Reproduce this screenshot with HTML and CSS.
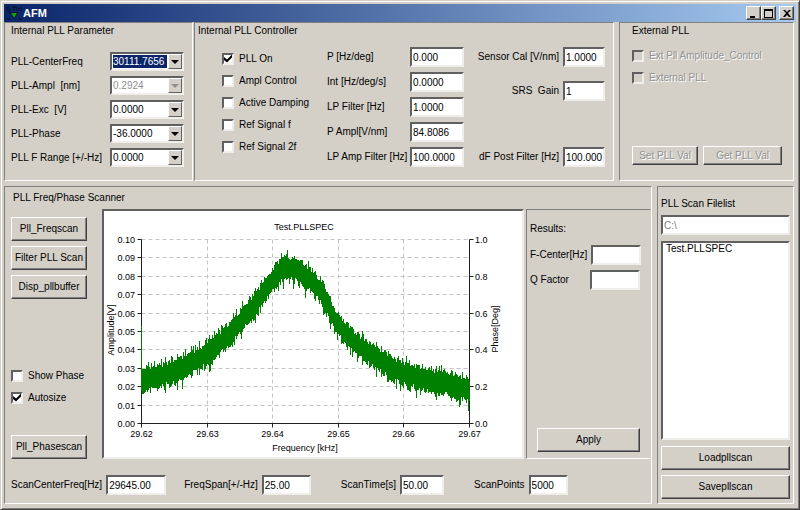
FILE: index.html
```html
<!DOCTYPE html>
<html lang="en">
<head>
  <meta charset="UTF-8">
  <meta name="viewport" content="width=device-width, initial-scale=1.0">
  <link rel="stylesheet" href="styles.css">
  <title>AFM</title>
</head>
<body>

<div class="window">
  <header class="titlebar">
    <svg class="app-icon" width="16" height="16" viewBox="0 0 16 16">
      <path d="M1 2h3M1 2v2h3v2H1M6 2h4M8 2v4M11 6V2l2 2 2-2v4" fill="none" stroke="#04102e" stroke-width="1"/>
      <path d="M3 7h10L8 14z" fill="#04102e"/>
      <path d="M5 8h6l-3 5z" fill="#10a010"/>
      <path d="M0 14h4M12 14h4" stroke="#04102e"/>
    </svg>
    <h1>AFM</h1>
    <button class="win-btn" aria-label="Minimize"><svg width="10" height="9" viewBox="0 0 10 9"><path d="M1 7h5v2H1z"/></svg></button>
    <button class="win-btn" aria-label="Maximize"><svg width="10" height="9" viewBox="0 0 10 9"><path fill-rule="evenodd" d="M0 0h9v9H0zM1 2v6h7V2z"/></svg></button>
    <button class="win-btn win-close" aria-label="Close"><svg width="10" height="9" viewBox="0 0 10 9"><path d="M1 1h2l2 2 2-2h2L6 4l3 4H7L5 6 3 8H1l3-4z"/></svg></button>
  </header>

  <main>
    <div class="top-row">
      <section class="panel parameter">
        <h2>Internal PLL Parameter</h2>
        <div class="combo-grid">
          <label for="center-freq">PLL-CenterFreq</label>
          <div class="combo active"><select id="center-freq"><option>30111.7656</option></select><span class="arrow"></span></div>
          <label for="ampl">PLL-Ampl&nbsp; [nm]</label>
          <div class="combo"><select id="ampl" disabled><option>0.2924</option></select><span class="arrow"></span></div>
          <label for="exc">PLL-Exc&nbsp; [V]</label>
          <div class="combo"><select id="exc"><option>0.0000</option></select><span class="arrow"></span></div>
          <label for="phase">PLL-Phase</label>
          <div class="combo"><select id="phase"><option>-36.0000</option></select><span class="arrow"></span></div>
          <label for="f-range">PLL F Range [+/-Hz]</label>
          <div class="combo"><select id="f-range"><option>0.0000</option></select><span class="arrow"></span></div>
        </div>
      </section>

      <section class="panel controller">
        <h2>Internal PLL Controller</h2>
        <div class="controller-body">
          <div class="checks">
            <label class="check"><input type="checkbox" checked>PLL On</label>
            <label class="check"><input type="checkbox">Ampl Control</label>
            <label class="check"><input type="checkbox">Active Damping</label>
            <label class="check"><input type="checkbox">Ref Signal f</label>
            <label class="check"><input type="checkbox">Ref Signal 2f</label>
          </div>
          <div class="gain-grid">
            <label for="p-gain">P [Hz/deg]</label><input type="text" id="p-gain" value="0.000">
            <label for="int-gain">Int [Hz/deg/s]</label><input type="text" id="int-gain" value="0.0000">
            <label for="lp-filter">LP Filter [Hz]</label><input type="text" id="lp-filter" value="1.0000">
            <label for="p-ampl">P Ampl[V/nm]</label><input type="text" id="p-ampl" value="84.8086">
            <label for="lp-amp">LP Amp Filter [Hz]</label><input type="text" id="lp-amp" value="100.0000">
          </div>
          <div class="sensor">
            <div class="field"><label for="sensor-cal">Sensor Cal [V/nm]</label><input type="text" id="sensor-cal" value="1.0000"></div>
            <div class="field"><label for="srs-gain">SRS&nbsp; Gain</label><input type="text" id="srs-gain" value="1"></div>
            <div class="field"><label for="post-filter">dF Post Filter [Hz]</label><input type="text" id="post-filter" value="100.000"></div>
          </div>
        </div>
      </section>

      <section class="panel external">
        <h2>External PLL</h2>
        <div class="checks">
          <label class="check disabled"><input type="checkbox" disabled>Ext Pll Amplitude_Control</label>
          <label class="check disabled"><input type="checkbox" disabled>External PLL</label>
        </div>
        <div class="external-buttons">
          <button class="btn" disabled>Set PLL Val</button>
          <button class="btn" disabled>Get PLL Val</button>
        </div>
      </section>
    </div>

    <div class="bottom-row">
      <section class="panel scanner">
        <h2>PLL Freq/Phase Scanner</h2>
        <div class="scanner-body">
          <div class="scan-tools">
            <button class="btn">Pll_Freqscan</button>
            <button class="btn">Filter PLL Scan</button>
            <button class="btn">Disp_pllbuffer</button>
            <div class="checks">
              <label class="check"><input type="checkbox">Show Phase</label>
              <label class="check"><input type="checkbox" checked>Autosize</label>
            </div>
            <button class="btn">Pll_Phasescan</button>
          </div>

          <div class="chart">
            <svg viewBox="0 0 418 246" role="img" aria-label="Amplitude over frequency">
              <g id="grid" class="grid"></g>
              <g id="axes" class="axes"></g>
              <path id="trace" class="trace"/>
              <g id="ticks"></g>
              <text x="200" y="19" text-anchor="middle">Test.PLLSPEC</text>
              <text x="201" y="240" text-anchor="middle">Frequency [kHz]</text>
              <text transform="translate(10 119) rotate(-90)" text-anchor="middle">Amplitude[V]</text>
              <text transform="translate(394 118) rotate(-90)" text-anchor="middle">Phase[Deg]</text>
            </svg>
          </div>

          <div class="results">
            <h3>Results:</h3>
            <div class="field"><label for="f-center">F-Center[Hz]</label><input type="text" id="f-center"></div>
            <div class="field"><label for="q-factor">Q Factor</label><input type="text" id="q-factor"></div>
            <button class="btn">Apply</button>
          </div>
        </div>
        <div class="scan-settings">
          <div class="field"><label for="scan-center">ScanCenterFreq[Hz]</label><input type="text" id="scan-center" value="29645.00"></div>
          <div class="field"><label for="freq-span">FreqSpan[+/-Hz]</label><input type="text" id="freq-span" value="25.00"></div>
          <div class="field"><label for="scan-time">ScanTime[s]</label><input type="text" id="scan-time" value="50.00"></div>
          <div class="field"><label for="scan-points">ScanPoints</label><input type="text" id="scan-points" value="5000"></div>
        </div>
      </section>

      <section class="panel filelist">
        <label for="scan-path">PLL Scan Filelist</label>
        <input type="text" id="scan-path" value="C:\" disabled>
        <select class="files" size="10" aria-label="Scan files">
          <option>Test.PLLSPEC</option>
        </select>
        <button class="btn">Loadpllscan</button>
        <button class="btn">Savepllscan</button>
      </section>
    </div>
  </main>
</div>

<script src="chart.js"></script>
</body>
</html>
```
FILE: styles.css
```css
* {
  box-sizing: border-box;
}

body {
  margin: 0;
  background: #d4d0c8;
  color: #000;
  font-family: "Liberation Sans", Arial, sans-serif;
  font-size: 10px;
  line-height: 16px;
}

h1, h2, h3 {
  margin: 0;
  font-size: 10px;
  font-weight: normal;
}

button, input, select {
  margin: 0;
  font: inherit;
  color: inherit;
}

label {
  white-space: nowrap;
}

.window {
  display: flex;
  flex-direction: column;
  min-height: 100vh;
  padding: 3px;
  border: 1px solid;
  border-color: #d4d0c8 #404040 #404040 #d4d0c8;
  box-shadow: inset 1px 1px #fff, inset -1px -1px #808080;
}

/* Title bar */
.titlebar {
  display: flex;
  align-items: center;
  height: 18px;
  padding: 0 2px;
  background: linear-gradient(to right, #0a246a, #a6caf0);
}

.app-icon {
  margin-right: 1px;
}

.titlebar h1 {
  flex: 1;
  color: #fff;
  font-size: 11px;
  font-weight: bold;
}

.win-btn {
  display: flex;
  align-items: center;
  justify-content: center;
  width: 15px;
  height: 14px;
  padding: 0;
  background: #d4d0c8;
  border: 1px solid;
  border-color: #fff #404040 #404040 #fff;
  box-shadow: inset -1px -1px #808080;
}

.win-close {
  margin-left: 3px;
}

/* Panels */
main {
  flex: 1;
  display: flex;
  flex-direction: column;
  gap: 5px;
  padding: 0 2px 2px 0;
}

.top-row {
  display: flex;
  gap: 1px;
}

.bottom-row {
  flex: 1;
  display: grid;
  grid-template-columns: 1fr 137px;
  gap: 5px;
}

.panel {
  border: 1px solid;
  border-color: #808080 #fff #fff #808080;
}

.parameter {
  width: 189px;
  padding: 0 8px 13px 6px;
}

.controller {
  flex: 1;
  padding: 0 8px 13px 3px;
}

.external {
  display: flex;
  flex-direction: column;
  width: 175px;
  margin-left: 4px;
  padding: 0 11px 15px 12px;
}

/* Fields */
input[type="text"], .combo, .files, .chart {
  background: #fff;
  border: 2px solid;
  border-color: #606060 #f0eeea #f0eeea #606060;
  border-radius: 0;
}

input[type="text"] {
  flex: none;
  min-width: 0;
  height: 20px;
  padding: 0 0 0 1px;
}

input[type="text"]:disabled {
  color: #808080;
}

.field {
  display: flex;
  align-items: center;
  gap: 4px;
}

.combo-grid {
  display: grid;
  grid-template-columns: 1fr 74px;
  row-gap: 5px;
  align-items: center;
  margin-top: 13px;
}

.combo-grid label {
  line-height: 19px;
}

.combo {
  display: grid;
  grid-template-columns: 1fr 14px;
  height: 19px;
}

.combo select {
  grid-area: 1 / 1 / 2 / 3;
  appearance: none;
  min-width: 0;
  padding: 0 15px 0 1px;
  background: none;
  border: 0;
  line-height: 15px;
  outline: none;
}

.combo select:disabled {
  color: #909090;
  opacity: 1;
}

.combo.active select {
  padding: 1px 15px 1px 1px;
  color: #fff;
  line-height: 13px;
  background: #0a246a content-box;
}

.arrow {
  grid-area: 1 / 2;
  display: flex;
  align-items: center;
  justify-content: center;
  background: #d4d0c8;
  border: 1px solid;
  border-color: #fff #606060 #606060 #fff;
  pointer-events: none;
}

.arrow::before {
  content: "";
  border: 4px solid transparent;
  border-top-color: #000;
  border-bottom: 0;
}

select:disabled + .arrow::before {
  border-top-color: #909090;
}

.checks {
  display: flex;
  flex-direction: column;
  gap: 9px;
}

.check {
  display: flex;
  align-items: center;
  gap: 5px;
  height: 13px;
}

.check input {
  appearance: none;
  flex: none;
  display: grid;
  place-items: center;
  width: 12px;
  height: 12px;
  background: #fff;
  border: 2px solid;
  border-color: #606060 #f0eeea #f0eeea #606060;
}

.check input:checked::before {
  content: "";
  width: 8px;
  height: 8px;
  background: #000;
  clip-path: polygon(0 30%, 38% 62%, 100% 0, 100% 38%, 38% 100%, 0 68%);
}

.check input:disabled {
  background: #d4d0c8;
}

.check.disabled, .btn:disabled {
  color: #909090;
  text-shadow: 1px 1px #fff;
}

.btn {
  height: 24px;
  padding: 0;
  background: #d4d0c8;
  border: 1px solid;
  border-color: #fff #404040 #404040 #fff;
  box-shadow: inset -1px -1px #808080;
  white-space: nowrap;
}

.controller-body {
  display: flex;
  margin-top: 8px;
  padding-left: 24px;
}

.controller .checks {
  width: 105px;
  padding-top: 5px;
}

.gain-grid {
  display: grid;
  grid-template-columns: 83px 54px;
  row-gap: 5px;
  align-items: center;
}

.sensor {
  flex: 1;
  display: flex;
  flex-direction: column;
  gap: 14px;
}

.sensor .field {
  justify-content: flex-end;
}

.sensor .field:last-child {
  margin-top: auto;
}

.sensor input {
  width: 42px;
}

.external .checks {
  margin-top: 10px;
}

.external-buttons {
  display: flex;
  gap: 5px;
  margin-top: auto;
}

.external-buttons .btn {
  flex: 5;
  height: 19px;
}

.external-buttons .btn:last-child {
  flex: 6;
}

/* Scanner */
.scanner {
  display: flex;
  flex-direction: column;
  padding-top: 3px;
}

.scanner h2 {
  padding-left: 8px;
}

.scanner-body {
  flex: 1;
  display: flex;
  margin-top: 3px;
  padding-left: 6px;
}

.scan-tools {
  display: flex;
  flex-direction: column;
  gap: 5px;
  width: 76px;
  margin-right: 15px;
  padding-top: 8px;
}

.scan-tools .checks {
  margin: auto 0 26px;
}

.chart {
  flex: 1;
  min-width: 0;
}

.chart svg {
  display: block;
  width: 100%;
  height: 100%;
}

.chart text {
  fill: #000;
  font-size: 9px;
}

.grid {
  stroke: #c4c4c4;
  stroke-dasharray: 4 3;
}

.axes {
  fill: none;
  stroke: #202020;
}

.trace {
  fill: none;
  stroke: #008000;
}

.results {
  display: flex;
  flex-direction: column;
  gap: 5px;
  width: 125px;
  margin-left: 2px;
  padding: 11px 10px 6px 3px;
  border: 1px solid;
  border-color: #808080 transparent #fff #808080;
}

.results h3 {
  margin-bottom: 3px;
}

.results .field {
  justify-content: space-between;
}

.results input {
  width: 50px;
}

.results .btn {
  margin: auto 0 0 7px;
}

.scan-settings {
  display: flex;
  gap: 30px;
  padding: 16px 6px 8px;
}

.scan-settings .field:first-child {
  margin-right: -12px;
}

#scan-center {
  width: 60px;
}

#freq-span {
  width: 49px;
}

#scan-time {
  width: 44px;
}

#scan-points {
  width: 39px;
}

/* File list */
.filelist {
  display: flex;
  flex-direction: column;
  gap: 5px;
  padding: 9px 3px 4px;
}

.filelist label {
  margin-bottom: -2px;
}

.files {
  flex: 1;
  margin: 1px 0;
  padding: 0;
  overflow: hidden;
  outline: none;
}

.files option {
  min-height: 12px;
  padding: 0 3px;
}
```
FILE: chart.js
```js
const left = 37.5;
const right = 365.5;
const top_ = 28.5;
const bottom = 212.5;

const grid = document.getElementById('grid');
const axes = document.getElementById('axes');
const ticks = document.getElementById('ticks');

function add(parent, name, attrs, text) {
  const el = document.createElementNS('http://www.w3.org/2000/svg', name);
  for (const key in attrs) {
    el.setAttribute(key, attrs[key]);
  }
  if (text) {
    el.textContent = text;
  }
  parent.appendChild(el);
}

// Amplitude and phase axes
for (let i = 0; i <= 10; i++) {
  const y = Math.floor(bottom - i * (bottom - top_) / 10) + 0.5;
  if (i > 0) {
    add(grid, 'path', { d: `M${left} ${y}H${right}` });
  }
  add(axes, 'path', { d: `M${left - 4} ${y}h4` });
  add(ticks, 'text', { x: 31, y: y + 3, 'text-anchor': 'end' }, (i / 100).toFixed(2));
  if (i % 2 === 0) {
    add(axes, 'path', { d: `M${right} ${y}h4` });
    add(ticks, 'text', { x: 371, y: y + 3 }, (i / 10).toFixed(1));
  }
}

// Frequency axis
for (let i = 0; i <= 5; i++) {
  const x = Math.floor(left + i * (right - left) / 5) + 0.5;
  if (i > 0 && i < 5) {
    add(grid, 'path', { d: `M${x} ${top_}V${bottom}` });
  }
  add(axes, 'path', { d: `M${x} ${bottom}v4` });
  add(ticks, 'text', { x: x, y: 226, 'text-anchor': 'middle' }, (29.62 + i / 100).toFixed(2));
}
add(axes, 'path', { d: `M${left} ${top_}V${bottom}H${right}V${top_}` });

// Resonance curve: [x, y] of the middle of the noise band
const curve = [
  [37, 171], [56, 165], [76, 158], [96, 148], [116, 131], [126, 123],
  [136, 111], [152, 92], [169, 68], [177, 59], [183, 56], [190, 58],
  [206, 68], [216, 79], [233, 112], [246, 128], [256, 136], [276, 149],
  [296, 161], [326, 170], [346, 174], [366, 179]
];

let seed = 7;
function random() {
  seed = (seed * 16807) % 2147483647;
  return seed / 2147483647;
}

function middle(x) {
  let i = 1;
  while (i < curve.length - 1 && curve[i][0] < x) {
    i++;
  }
  const [x0, y0] = curve[i - 1];
  const [x1, y1] = curve[i];
  return y0 + (y1 - y0) * (x - x0) / (x1 - x0);
}

let d = `M${left} 115V180`;
for (let x = left; x <= right; x++) {
  const y = middle(x);
  const up = 8 + random() * 5 + Math.pow(random(), 4) * 7;
  const down = 8 + random() * 5 + Math.pow(random(), 4) * 9;
  d += `M${x} ${Math.round(y - up)}V${Math.round(y + down)}`;
}
document.getElementById('trace').setAttribute('d', d);
```
